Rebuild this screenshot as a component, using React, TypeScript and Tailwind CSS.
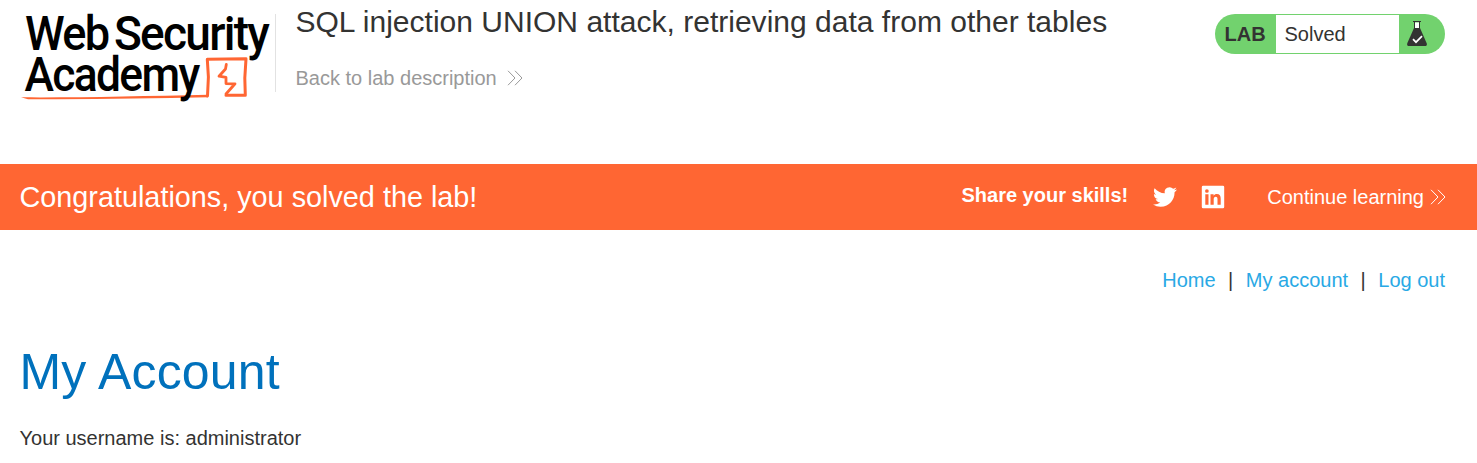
function Chevrons({ className }: { className: string }) {
  return (
    <svg className={className} width="16" height="16" viewBox="0 0 16 16" fill="none" stroke="currentColor" strokeWidth="1">
      <path d="M1 .8 8 8 1 15.2M8 .8 15 8 8 15.2" />
    </svg>
  );
}

function Logo() {
  return (
    <svg className="block shrink-0" width="275" height="110" viewBox="0 0 275 110" role="img" aria-label="Web Security Academy">
      <path d="M21 97.3C75 97.800 145 96 208 94.700V97.300C150 98.200 90 99.800 28 99.200Z" fill="#ff6633" />
      <g fill="none" stroke="#ff6633" strokeLinecap="round" strokeLinejoin="round">
        <path d="M207.500 96 208.400 77 207.300 59.300 246 58.800 244.800 78 245.300 95.300 226 95.300" strokeWidth="3" />
        <path d="M226.300 64.500 225.500 69 219 76.200 226 77.400 226 83.600 235 83.800 226 94" strokeWidth="2.8" />
      </g>
      <g fill="#000" fontFamily="Roboto, sans-serif" fontWeight="500" fontSize="47.5" letterSpacing="-1.8">
        <text x="25" y="50" textLength="83.5" lengthAdjust="spacingAndGlyphs">Web</text>
        <text x="114" y="50" textLength="154" lengthAdjust="spacingAndGlyphs">Security</text>
        <text x="24.500" y="90.500" textLength="174" lengthAdjust="spacingAndGlyphs">Academy</text>
      </g>
    </svg>
  );
}

function Flask() {
  return (
    <svg width="20" height="26" viewBox="0 0 20 26" fill="none">
      <path d="M7.500 1.500V8h5V1.500Z" fill="#fff" />
      <path d="M6 .5h8M7.500 .5v7M12.500 .5v7" stroke="#333332" strokeWidth="1" />
      <path d="M7 7h6l6.600 15c.6 1.800.2 2.900-1.400 2.900H1.800C.2 24.900-.2 23.800.4 22Z" fill="#333332" />
      <path d="m6 18.200 3 3 6-6" stroke="#fff" strokeWidth="1.700" />
    </svg>
  );
}

export default function App() {
  return (
    <div className="h-[463px] w-[1477px] overflow-hidden bg-white font-['Liberation_Sans',Arial,sans-serif] text-xl text-[#333332]">
      <header className="flex h-[164px] items-start">
        <Logo />
        <div className="mt-[14px] h-[78px] w-px bg-[#e2e2e2]" />
        <div className="ml-[19.5px]">
          <h2 className="mt-1 text-[30px] leading-9 tracking-[0.012px] whitespace-nowrap">SQL injection UNION attack, retrieving data from other tables</h2>
          <a className="mt-[26px] flex items-center leading-6 text-[#999]">
            <span>Back to lab description</span>
            <Chevrons className="ml-2.5" />
          </a>
        </div>
        <div className="mt-[14px] mr-8 ml-auto flex h-10 w-[230px] shrink-0 items-stretch overflow-hidden rounded-[20px] bg-[#72d26e]">
          <div className="flex w-[61px] items-center pl-[9.5px] font-bold">LAB</div>
          <div className="my-px flex w-[123px] items-center bg-white pl-[8.5px]">Solved</div>
          <div className="flex items-center pl-2"><Flask /></div>
        </div>
      </header>
      <section className="flex h-[66px] items-center bg-[#ff6633] pr-[31px] pl-[19.5px] text-white">
        <h4 className="text-[28.8px] leading-9">Congratulations, you solved the lab!</h4>
        <span className="mb-1 ml-auto font-bold">Share your skills!</span>
        <svg className="ml-[25px]" width="24" height="24" viewBox="0 0 24 24" fill="currentColor">
          <path d="M23.953 4.57a10 10 0 0 1-2.825.775 4.958 4.958 0 0 0 2.163-2.723c-.951.555-2.005.959-3.127 1.184a4.92 4.92 0 0 0-8.384 4.482C7.69 8.095 4.067 6.13 1.64 3.162a4.822 4.822 0 0 0-.666 2.475c0 1.71.87 3.213 2.188 4.096a4.904 4.904 0 0 1-2.228-.616v.06a4.923 4.923 0 0 0 3.946 4.827 4.996 4.996 0 0 1-2.212.085 4.936 4.936 0 0 0 4.604 3.417 9.867 9.867 0 0 1-6.102 2.105c-.39 0-.779-.023-1.17-.067a13.995 13.995 0 0 0 7.557 2.209c9.053 0 13.998-7.496 13.998-13.985 0-.21 0-.42-.015-.63A9.935 9.935 0 0 0 24 4.59Z" />
        </svg>
        <svg className="ml-6" width="24" height="24" viewBox="0 0 24 24" fill="none">
          <rect x=".8" y=".8" width="22.4" height="22.4" rx="1.3" fill="#fff" />
          <path d="M4.300 9.200h3.200v10.500H4.300Z M9.500 9.200h3.100v1.500c.7-1.200 1.800-1.800 3.200-1.800 2.900 0 3.900 1.700 3.900 4.800v6h-3.200v-5.500c0-1.600-.4-2.500-1.700-2.500-1.500 0-2.100 1-2.100 2.500v5.500H9.500Z" fill="#ff6633" />
          <circle cx="5.9" cy="6" r="1.85" fill="#ff6633" />
        </svg>
        <a className="ml-[42px] flex items-center">
          <span>Continue learning</span>
          <Chevrons className="ml-1.5" />
        </a>
      </section>
      <nav className="flex h-[100px] items-center justify-end pr-8 leading-6">
        <a className="text-[#29a9e5]">Home</a>
        <span className="mx-[12.5px]">|</span>
        <a className="text-[#29a9e5]">My account</a>
        <span className="mx-[12.5px]">|</span>
        <a className="text-[#29a9e5]">Log out</a>
      </nav>
      <main className="pl-[19.5px]">
        <h1 className="pt-3 text-[50px] leading-[60px] tracking-[0.2px] text-[#0071bc]">My Account</h1>
        <p className="mt-6 leading-6">Your username is: administrator</p>
      </main>
    </div>
  );
}
